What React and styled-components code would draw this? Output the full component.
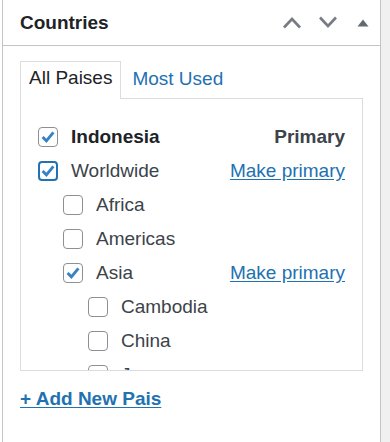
import React from "react";
import styled, { createGlobalStyle, css } from "styled-components";

const GlobalStyle = createGlobalStyle`
  html, body {
    margin: 0;
    padding: 0;
    background: #f0f0f1;
  }
  body {
    font-family: "Liberation Sans", Arial, sans-serif;
    color: #3c434a;
  }
`;

const terms = [
  { name: "Indonesia", level: 0, checked: true, primary: true },
  { name: "Worldwide", level: 0, checked: true, focused: true, action: true },
  { name: "Africa", level: 1 },
  { name: "Americas", level: 1 },
  { name: "Asia", level: 1, checked: true, action: true },
  { name: "Cambodia", level: 2 },
  { name: "China", level: 2 },
  { name: "Japan", level: 2 },
];

const ChevronUp = () => (
  <svg width="20" height="13" viewBox="0 0 20 13" fill="none">
    <path d="M2 11.5 L10 3 L18 11.5" stroke="#787c82" strokeWidth="2.6" />
  </svg>
);

const ChevronDown = () => (
  <svg width="20" height="13" viewBox="0 0 20 13" fill="none">
    <path d="M2 1.5 L10 10 L18 1.5" stroke="#787c82" strokeWidth="2.6" />
  </svg>
);

const Triangle = () => (
  <svg width="12" height="8" viewBox="0 0 12 8">
    <polygon points="0.5,7.5 6,0.5 11.5,7.5" fill="#646970" />
  </svg>
);

const Check = () => (
  <svg width="20" height="20" viewBox="0 0 20 20" fill="none">
    <path
      d="M4 10 L8.2 14.3 L16 4.8"
      stroke="#3582c4"
      strokeWidth="3.2"
      strokeLinejoin="miter"
    />
  </svg>
);

export default function App() {
  return (
    <>
      <GlobalStyle />
      <Page>
        <Panel>
          <Header>
            <Title>Countries</Title>
            <HandleGroup>
              <HandleButton $width={36}>
                <ChevronUp />
              </HandleButton>
              <HandleButton $width={36}>
                <ChevronDown />
              </HandleButton>
              <HandleButton $width={34}>
                <Triangle />
              </HandleButton>
            </HandleGroup>
          </Header>
          <Inside>
            <Tabs>
              <Tab $active>All Paises</Tab>
              <Tab>Most Used</Tab>
            </Tabs>
            <TabsPanel>
              {terms.map((t) => (
                <TermRow key={t.name} $level={t.level}>
                  <CheckBox $focused={t.focused}>{t.checked && <Check />}</CheckBox>
                  <TermLabel $bold={t.primary}>{t.name}</TermLabel>
                  {t.primary && <PrimaryTag>Primary</PrimaryTag>}
                  {t.action && <MakePrimary href="#">Make primary</MakePrimary>}
                </TermRow>
              ))}
            </TabsPanel>
            <AddNew href="#">+ Add New Pais</AddNew>
          </Inside>
        </Panel>
      </Page>
    </>
  );
}

const Page = styled.div`
  display: flex;
  min-height: 100vh;
  border-left: 2px solid #fff;
`;

const Panel = styled.div`
  width: 377px;
  min-height: 100vh;
  background: #fff;
  border-left: 1px solid #c3c4c7;
  border-right: 1px solid #c3c4c7;
`;

const Header = styled.div`
  display: flex;
  align-items: center;
  height: 45px;
  padding-left: 17px;
  border-bottom: 1px solid #c3c4c7;
`;

const Title = styled.h2`
  flex: 1;
  margin: 0;
  font-size: 19px;
  font-weight: 700;
  color: #1d2327;
`;

const HandleGroup = styled.div`
  display: flex;
  align-items: center;
`;

const HandleButton = styled.span`
  display: flex;
  align-items: center;
  justify-content: center;
  width: ${(p) => p.$width}px;
  height: 36px;
`;

const Inside = styled.div`
  padding: 15px 17px 0;
`;

const Tabs = styled.div`
  display: flex;
  align-items: flex-end;
`;

const Tab = styled.span`
  padding: 5px 8px 9px;
  font-size: 19px;
  line-height: 22px;
  border: 1px solid transparent;
  border-bottom: none;
  margin-bottom: -1px;
  position: relative;
  ${(p) =>
    p.$active
      ? css`
          color: #1d2327;
          background: #fff;
          border-color: #dcdcde;
          padding-bottom: 10px;
        `
      : css`
          color: #2271b1;
          margin-left: 2px;
        `}
`;

const TabsPanel = styled.div`
  height: 250px;
  overflow: hidden;
  padding: 21px 17px 0 17px;
  border: 1px solid #dcdcde;
`;

const TermRow = styled.div`
  display: flex;
  align-items: center;
  height: 34px;
  padding-left: ${(p) => p.$level * 25}px;
`;

const CheckBox = styled.span`
  flex: none;
  box-sizing: border-box;
  width: 20px;
  height: 20px;
  margin-right: 13px;
  border-radius: 4px;
  border: 1px solid #8c8f94;
  display: flex;
  align-items: center;
  justify-content: center;
  ${(p) =>
    p.$focused &&
    css`
      border: 2px solid #2271b1;
      & svg {
        margin: -1px;
      }
    `}
`;

const TermLabel = styled.span`
  flex: 1;
  font-size: 19px;
  line-height: 22px;
  color: ${(p) => (p.$bold ? "#1d2327" : "#3c434a")};
  font-weight: ${(p) => (p.$bold ? 700 : 400)};
`;

const PrimaryTag = styled.span`
  font-size: 19px;
  font-weight: 700;
  color: #3c434a;
`;

const MakePrimary = styled.a`
  font-size: 19px;
  color: #2271b1;
  text-decoration: underline;
  text-underline-offset: 2px;
`;

const AddNew = styled.a`
  display: inline-block;
  margin-top: 17px;
  font-size: 19px;
  line-height: 22px;
  font-weight: 700;
  color: #2271b1;
  text-decoration: underline;
  text-underline-offset: 2px;
`;
